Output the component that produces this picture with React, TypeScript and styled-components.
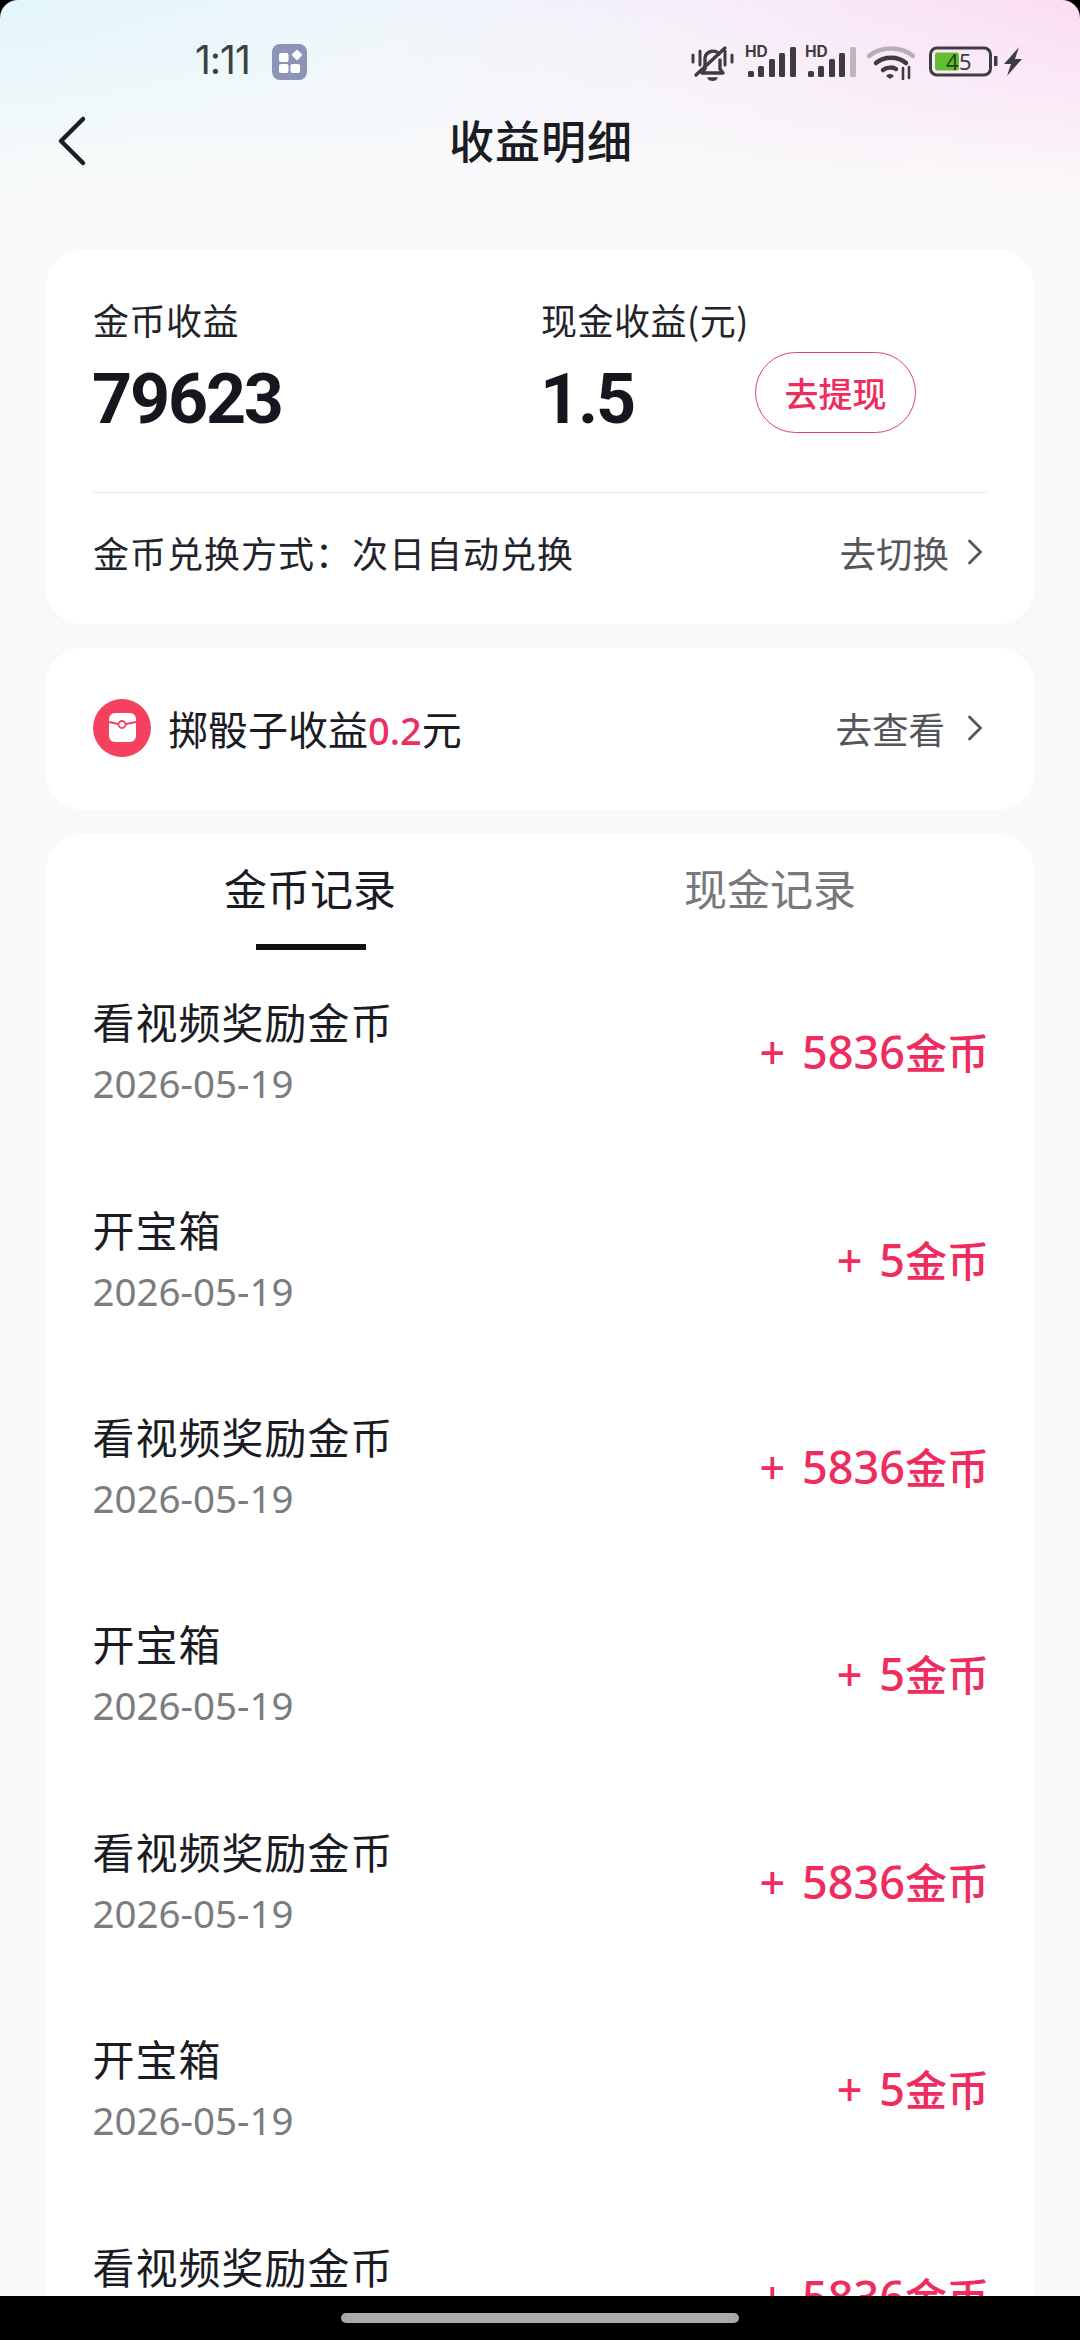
import React from "react";
import styled, { createGlobalStyle } from "styled-components";

const Global = createGlobalStyle`
  html, body { margin: 0; padding: 0; background: #000; }
  * { box-sizing: border-box; }
  #root { width: 1080px; height: 2340px; }
`;

const Phone = styled.div`
  width: 1080px; height: 2340px; display: flex; flex-direction: column; overflow: hidden;
  font-family: "Noto Sans CJK SC", "Noto Sans", sans-serif; color: #1b1b24; background: #000;
`;
const Screen = styled.main`
  height: 2296px; overflow: hidden; border-radius: 18px 18px 0 0; background-color: #f9f9f9;
  background-image: linear-gradient(180deg, rgba(250,250,250,0) 0, rgba(250,250,250,0.45) 100px, rgba(250,250,250,0.85) 170px, #f9f9f9 270px),
    linear-gradient(90deg, #e3f6fb 0%, #eef6fb 35%, #f6eef9 65%, #fbdcf4 100%);
  background-repeat: no-repeat;
`;
const StatusBar = styled.div`
  height: 104px; padding: 24px 0 0 195px; display: flex; align-items: flex-start;
`;
const Clock = styled.div`
  font: 400 39px/72px "Inter", sans-serif; letter-spacing: -1px; color: #3b4043; width: 77px;
`;
const AppBadge = styled.svg`margin-top: 20px; margin-left: 0;`;
const StatusIcons = styled.div`
  margin-left: auto; display: flex; align-items: flex-start; padding: 21px 55px 0 0; width: 395px; justify-content: flex-end;
`;
const IconSlot = styled.svg<{ $ml: number; $mt?: number }>`
  margin-left: ${p => p.$ml}px; margin-top: ${p => p.$mt ?? 0}px; display: block; flex: none;
`;

const Header = styled.header`
  height: 68px; position: relative; display: flex; align-items: center; justify-content: center; margin-top: 5px; padding: 0 0 6px 2px;
`;
const Back = styled.svg`position: absolute; left: 55px; top: 6px;`;
const Title = styled.h1`
  margin: 0; font-size: 45px; line-height: 62px; font-weight: 500; letter-spacing: 1px; color: #1b1b24;
`;

const Card = styled.section`
  margin: 0 46px; background: #fff; border-radius: 36px;
`;
const SummaryCard = styled(Card)`
  margin-top: 73px; height: 374px; padding: 45px 47px 0;
`;
const Stats = styled.div`
  display: grid; grid-template-columns: 448px 1fr; height: 198px; border-bottom: 1.5px solid #e6e6e6;
`;
const Stat = styled.div`display: flex; flex-direction: column;`;
const StatLabel = styled.div`font-size: 36px; line-height: 48px; letter-spacing: .5px; color: #23232b;`;
const StatValueRow = styled.div`display: flex; align-items: flex-start; margin-top: 18px;`;
const StatValue = styled.div<{ $w?: number }>`
  font: 700 70px/76px "Roboto", "Noto Sans", sans-serif; color: #16161e; letter-spacing: -2.2px; margin-left: -1px; width: ${p => p.$w ? p.$w + "px" : "auto"};
`;
const WithdrawButton = styled.button`
  width: 161px; height: 81px; padding: 0; border: 1.5px solid #d4486d; border-radius: 41px; background: #fff;
  color: #ee2d5e; font: 500 34px/1 "Noto Sans CJK SC", sans-serif; margin: -9px 0 0 3px;
`;
const SplitRow = styled.div`
  display: flex; align-items: center; justify-content: space-between;
`;
const ExchangeRow = styled(SplitRow)`height: 122px; padding-bottom: 4px;`;
const ExchangeText = styled.div`font-size: 36px; letter-spacing: 1px; color: #23232b;`;
const Link = styled.div<{ $gap: number }>`
  display: flex; align-items: center; gap: ${p => p.$gap}px; font-size: 36.5px; color: #55565c; padding-right: 5px;
`;
const BannerCard = styled(Card)`margin-top: 24px; height: 162px; padding: 0 47px;`;
const BannerRow = styled(SplitRow)`height: 100%; padding-bottom: 2px;`;
const BannerLeft = styled.div`display: flex; align-items: center; gap: 17px; font-size: 40px; color: #1b1b24;`;
const Pink = styled.span`color: #ee2d5e; font: 500 38px/1 "Noto Sans", sans-serif;`;
const ListCard = styled(Card)`margin-top: 24px; padding: 0 34px; height: 1600px; border-radius: 36px 36px 0 0;`;
const Tabs = styled.div`display: grid; grid-template-columns: 1fr 1fr; height: 116px;`;
const Tab = styled.div<{ $active?: boolean }>`
  position: relative; text-align: center; font-size: 43px; line-height: 106px;
  color: ${p => p.$active ? "#1b1b24" : "#77777c"};
  &::after {
    content: ""; display: ${p => p.$active ? "block" : "none"}; position: absolute; left: 176px; bottom: 0; width: 110px; height: 6px; background: #111;
  }
`;
const Row = styled(SplitRow)`height: 207.4px; padding: 0 11px 0 12.5px;`;
const RowText = styled.div`display: flex; flex-direction: column; margin-top: -6px;`;
const RowTitle = styled.div`font-size: 42px; line-height: 58px; color: #1b1b24; letter-spacing: 1px;`;
const RowDate = styled.div`font: 400 38.5px/52px "Noto Sans", sans-serif; color: #7b7b80; margin-top: 7px;`;
const Amount = styled.div`font: 500 42px/1 "Noto Sans CJK SC", sans-serif; color: #ee2d5e; margin-top: -4px; display: flex; align-items: baseline;`;
const AmountNum = styled.span`font: 500 45px/1 "Noto Sans", sans-serif; word-spacing: 5px;`;
const NavBar = styled.div`
  height: 44px; background: #000; display: flex; justify-content: center; padding-top: 17px;
`;
const HomePill = styled.div`width: 398px; height: 10px; border-radius: 5px; background: #aaa;`;

const Signal = ({ ml, dim }: { ml: number; dim?: boolean }) => (
  <IconSlot $ml={ml} $mt={-4} width="51" height="36" viewBox="0 -4 51 36">
    <text x="0" y="11.500" fontFamily="Inter, sans-serif" fontWeight="700" fontSize="15.500" fill="#3e3c42">HD</text>
    <rect x="3" y="26" width="6" height="6" rx="1.5" fill="#3e3c42" />
    <rect x="13" y="21" width="6" height="11" rx="1.5" fill="#3e3c42" />
    <rect x="24" y="14" width="6" height="18" rx="1.5" fill="#3e3c42" />
    <rect x="34" y="8" width="6" height="24" rx="1.5" fill="#3e3c42" />
    <rect x="45" y="2" width="6" height="30" rx="1.5" fill={dim ? "#bdb8bf" : "#3e3c42"} />
  </IconSlot>
);

const Chevron = () => (
  <svg width="14" height="26" viewBox="0 0 14 26" fill="none"><path d="M1.5 2 12.5 13 1.5 24" stroke="#55565c" strokeWidth="2.8" strokeLinecap="round" strokeLinejoin="round" /></svg>
);

const records: [string, string][] = [
  ["看视频奖励金币", "+ 5836"], ["开宝箱", "+ 5"],
  ["看视频奖励金币", "+ 5836"], ["开宝箱", "+ 5"],
  ["看视频奖励金币", "+ 5836"], ["开宝箱", "+ 5"],
  ["看视频奖励金币", "+ 5836"],
];

export default function App() {
  return (
    <Phone>
      <Global />
      <Screen>
        <StatusBar>
          <Clock>1:11</Clock>
          <AppBadge width="35" height="36" viewBox="0 0 35 36">
            <rect width="35" height="36" rx="8" fill="#8e94b8" />
            <rect x="7" y="9" width="9.5" height="9" rx="2" fill="#fff" />
            <rect x="21" y="7" width="8" height="8" rx="1.5" fill="#fff" transform="rotate(45 25 11)" />
            <rect x="7" y="20" width="9.5" height="9" rx="2" fill="#fff" />
            <rect x="18.500" y="20" width="9.5" height="9" rx="2" fill="#fff" />
          </AppBadge>
          <StatusIcons>
            <IconSlot $ml={0} width="45" height="38" viewBox="0 0 45 38" fill="none" stroke="#3e3c42" strokeLinecap="round" strokeLinejoin="round">
              <path d="M3 10v7M10 6v14M35 6v14M42 10v7" strokeWidth="3" />
              <path d="M15 24V13a8 8 0 0 1 14-4M30 15v9l3 4H12l3-4" strokeWidth="3.4" />
              <path d="M6 30 35 3" strokeWidth="3.4" />
              <path d="M18 33c2 3 7 3 9 0z" fill="#3e3c42" strokeWidth="1.5" />
            </IconSlot>
            <Signal ml={10} />
            <Signal ml={9} dim />
            <IconSlot $ml={11} width="48" height="35" viewBox="0 0 48 35" fill="none" strokeLinecap="round">
              <path d="M2 11C14 1 34 1 46 11" stroke="#b5b0b6" strokeWidth="4.5" />
              <path d="M9 18C17 11 31 11 39 18" stroke="#3e3c42" strokeWidth="4.5" />
              <path d="M16 25c4-3 10-3 13-1" stroke="#3e3c42" strokeWidth="4.5" />
              <path d="M19 31a5 5 0 0 1 8 0l-4 3z" fill="#3e3c42" />
              <path d="M36 23v11M42 22v11" stroke="#3e3c42" strokeWidth="2.6" />
            </IconSlot>
            <IconSlot $ml={14} width="96" height="32" viewBox="0 0 96 32">
              <rect x="1.5" y="3" width="60" height="27" rx="6.5" fill="none" stroke="#3e3c42" strokeWidth="3" />
              <rect x="6" y="7.5" width="24" height="18" rx="2.5" fill="#63bd32" />
              <path d="M65 11h2.500a1 1 0 0 1 1 1v8a1 1 0 0 1-1 1H65z" fill="#3e3c42" />
              <text x="17" y="25" fontFamily="Noto Sans, sans-serif" fontSize="22" fill="#1e4a12">4</text>
              <text x="30" y="25" fontFamily="Noto Sans, sans-serif" fontSize="22" fill="#3e3c42">5</text>
              <path d="M90 2 75 19h7l-4 12 15-17h-7z" fill="#3e3c42" />
            </IconSlot>
          </StatusIcons>
        </StatusBar>
        <Header>
          <Back width="32" height="52" viewBox="0 0 32 52" fill="none">
            <path d="M28 4 6 26 28 48" stroke="#1b1f24" strokeWidth="4.500" strokeLinecap="round" strokeLinejoin="round" />
          </Back>
          <Title>收益明细</Title>
        </Header>
        <SummaryCard>
          <Stats>
            <Stat>
              <StatLabel>金币收益</StatLabel>
              <StatValueRow><StatValue>79623</StatValue></StatValueRow>
            </Stat>
            <Stat>
              <StatLabel>现金收益(元)</StatLabel>
              <StatValueRow>
                <StatValue $w={212}>1.5</StatValue>
                <WithdrawButton>去提现</WithdrawButton>
              </StatValueRow>
            </Stat>
          </Stats>
          <ExchangeRow>
            <ExchangeText>金币兑换方式：次日自动兑换</ExchangeText>
            <Link $gap={19}>去切换<Chevron /></Link>
          </ExchangeRow>
        </SummaryCard>
        <BannerCard>
          <BannerRow>
            <BannerLeft>
              <svg width="58" height="58" viewBox="0 0 58 58">
                <circle cx="29" cy="29" r="29" fill="#f5405f" />
                <rect x="16" y="14" width="27" height="29" rx="6" fill="#fff" />
                <path d="M16 23l9 2M33 25l10-2" stroke="#f5405f" strokeWidth="1.8" fill="none" />
                <circle cx="29" cy="25.500" r="3.500" fill="#fff" stroke="#f5405f" strokeWidth="1.8" />
              </svg>
              <span>掷骰子收益<Pink>0.2</Pink>元</span>
            </BannerLeft>
            <Link $gap={23}>去查看<Chevron /></Link>
          </BannerRow>
        </BannerCard>
        <ListCard>
          <Tabs>
            <Tab $active>金币记录</Tab>
            <Tab>现金记录</Tab>
          </Tabs>
          {records.map(([t, a], i) => (
            <Row key={i}>
              <RowText>
                <RowTitle>{t}</RowTitle>
                <RowDate>2026-05-19</RowDate>
              </RowText>
              <Amount><AmountNum>{a}</AmountNum>金币</Amount>
            </Row>
          ))}
        </ListCard>
      </Screen>
      <NavBar><HomePill /></NavBar>
    </Phone>
  );
}
